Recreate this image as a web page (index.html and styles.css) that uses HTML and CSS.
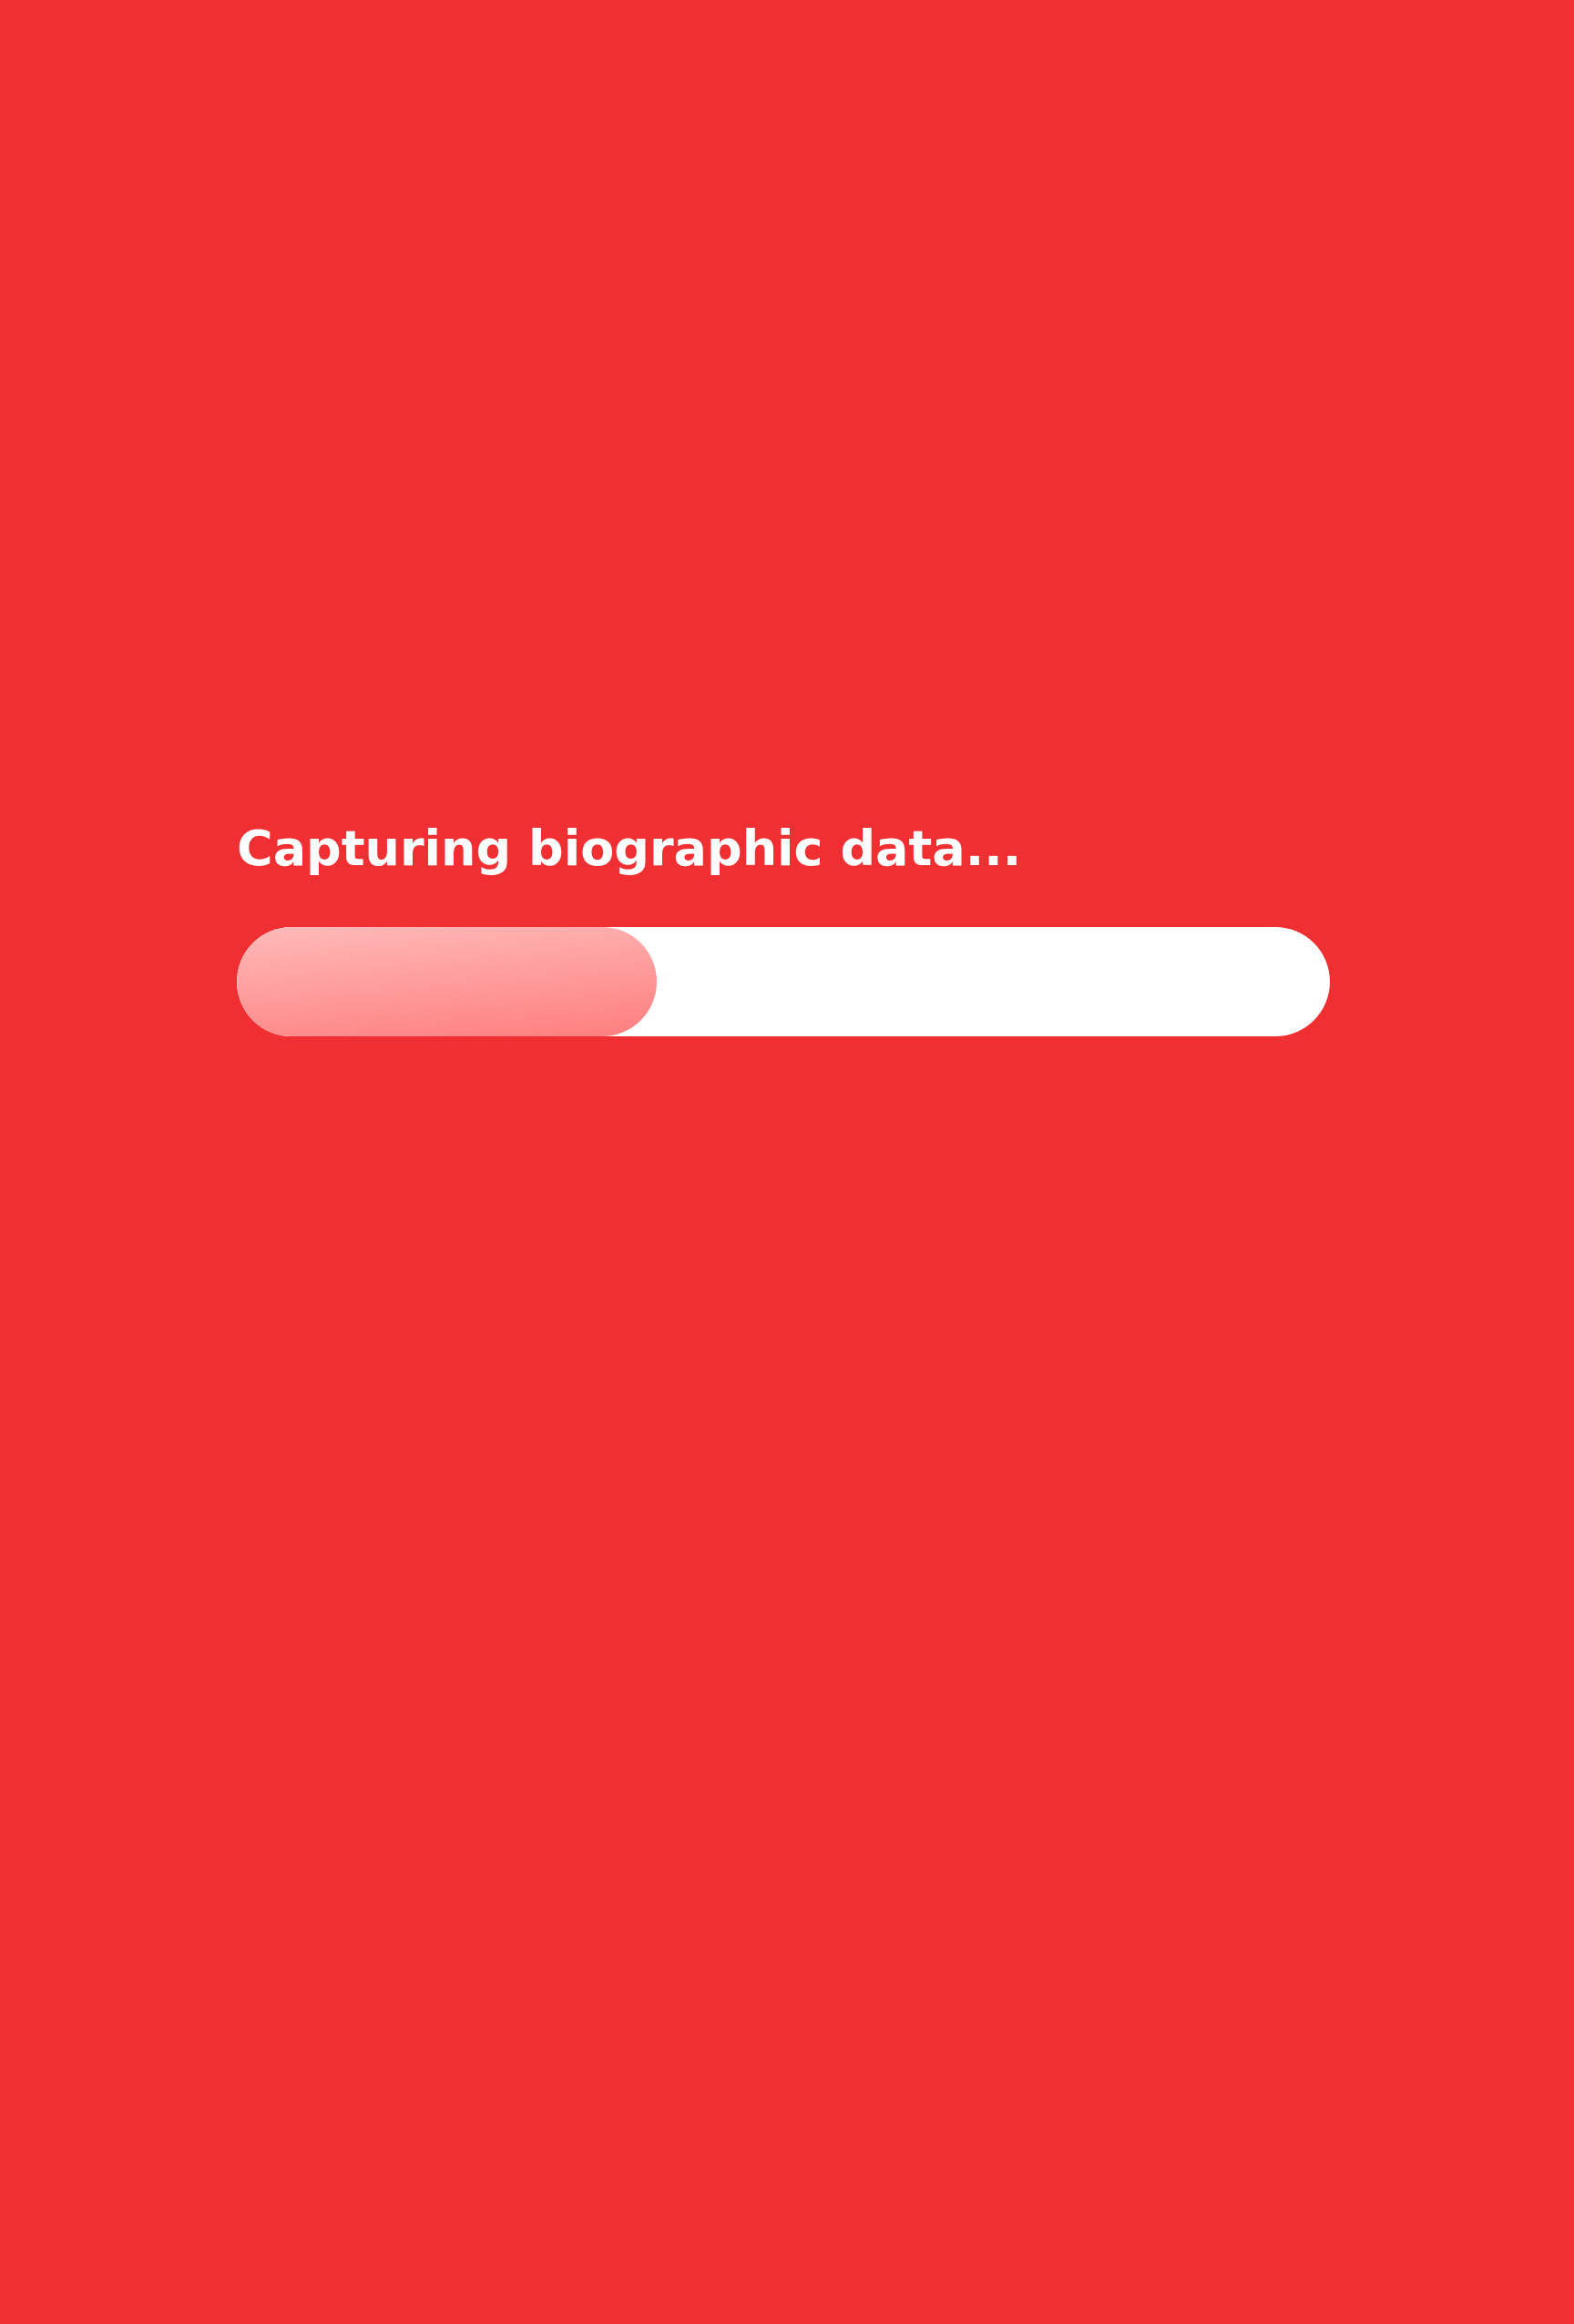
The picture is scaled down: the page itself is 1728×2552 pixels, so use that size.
FILE: index.html
```html
<!DOCTYPE html>
<html lang="en">
<head>
<meta charset="utf-8">
<title>Capturing biographic data</title>
<link rel="stylesheet" href="styles.css">
</head>
<body>
<main class="screen">
  <section class="loader">
    <h1 class="loader-title">Capturing biographic data...</h1>
    <div class="progress">
      <div class="progress-fill" style="width: 461px"></div>
    </div>
  </section>
</main>
</body>
</html>
```
FILE: styles.css
```css
html, body {
  margin: 0;
  padding: 0;
}
body {
  background: #f02f33;
  font-family: "DejaVu Sans", "Open Sans", sans-serif;
}
.screen {
  min-height: 2552px;
  display: flex;
  flex-direction: column;
}
.loader {
  padding: 896px 268px 0 260px;
  display: flex;
  flex-direction: column;
}
.loader-title {
  margin: 0;
  color: #ffffff;
  font-size: 54px;
  font-weight: 700;
  line-height: 72px;
  letter-spacing: 0px;
  white-space: nowrap;
}
.progress {
  margin-top: 50px;
  height: 120px;
  width: 1200px;
  background: #ffffff;
  border-radius: 60px;
  overflow: hidden;
  display: flex;
}
.progress-fill {
  height: 100%;
  border-radius: 60px;
  background: linear-gradient(175deg, #ffbaba 0%, #ff9c9c 50%, #ff7e7e 100%);
}
```
